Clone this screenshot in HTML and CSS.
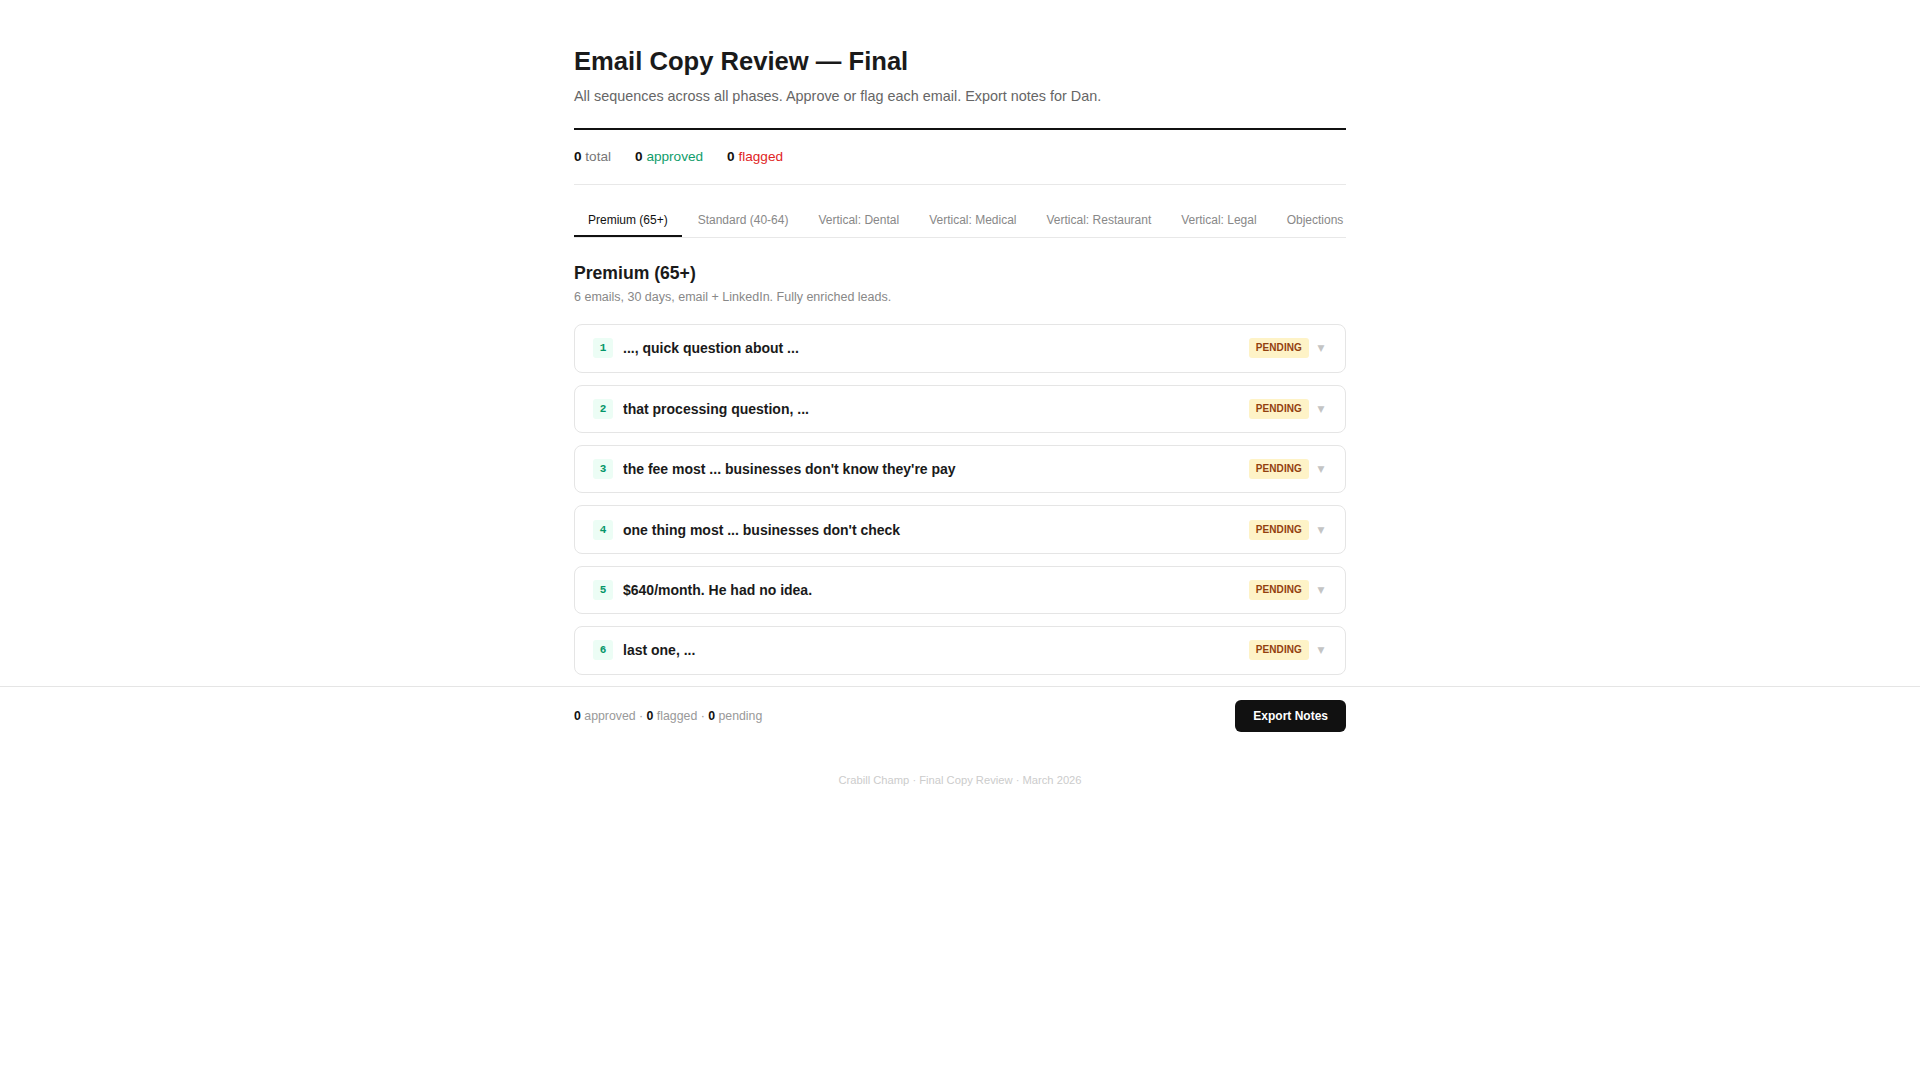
FILE: index.html
```html
<!DOCTYPE html>
<html lang="en">
<head>
<meta charset="utf-8">
<title>Email Copy Review — Final</title>
<link rel="stylesheet" href="styles.css">
</head>
<body>
<main class="wrap">
  <header class="header">
    <h1 class="title">Email Copy Review — Final</h1>
    <p class="subtitle">All sequences across all phases. Approve or flag each email. Export notes for Dan.</p>
  </header>

  <div class="stats">
    <span class="stat"><b>0</b> total</span>
    <span class="stat stat-approved"><b>0</b> approved</span>
    <span class="stat stat-flagged"><b>0</b> flagged</span>
  </div>

  <nav class="tabs">
    <button class="tab active">Premium (65+)</button>
    <button class="tab">Standard (40-64)</button>
    <button class="tab">Vertical: Dental</button>
    <button class="tab">Vertical: Medical</button>
    <button class="tab">Vertical: Restaurant</button>
    <button class="tab">Vertical: Legal</button>
    <button class="tab">Objections</button>
  </nav>

  <section class="section">
    <h2 class="section-title">Premium (65+)</h2>
    <p class="section-desc">6 emails, 30 days, email + LinkedIn. Fully enriched leads.</p>

    <div class="list">
      <div class="card"><span class="num">1</span><span class="subject">..., quick question about ...</span><span class="status">PENDING</span><span class="chev">▼</span></div>
      <div class="card"><span class="num">2</span><span class="subject">that processing question, ...</span><span class="status">PENDING</span><span class="chev">▼</span></div>
      <div class="card"><span class="num">3</span><span class="subject">the fee most ... businesses don't know they're pay</span><span class="status">PENDING</span><span class="chev">▼</span></div>
      <div class="card"><span class="num">4</span><span class="subject">one thing most ... businesses don't check</span><span class="status">PENDING</span><span class="chev">▼</span></div>
      <div class="card"><span class="num">5</span><span class="subject">$640/month. He had no idea.</span><span class="status">PENDING</span><span class="chev">▼</span></div>
      <div class="card"><span class="num">6</span><span class="subject">last one, ...</span><span class="status">PENDING</span><span class="chev">▼</span></div>
    </div>
  </section>
</main>

<div class="bar">
  <div class="bar-inner">
    <div class="bar-stats"><b>0</b> approved · <b>0</b> flagged · <b>0</b> pending</div>
    <button class="export">Export Notes</button>
  </div>
</div>

<footer class="footer">Crabill Champ · Final Copy Review · March 2026</footer>
</body>
</html>
```

FILE: styles.css
```css
* { box-sizing: border-box; }

html, body {
  margin: 0;
  padding: 0;
  background: #fff;
}

body {
  font-family: "Liberation Sans", Arial, Helvetica, sans-serif;
  color: #111;
}

.wrap {
  max-width: 820px;
  margin: 0 auto;
  padding: 46px 24px 0;
}

.header {
  padding-bottom: 21px;
  border-bottom: 2px solid #111;
}

.title {
  margin: 0 0 9px;
  font-size: 25.6px;
  line-height: 1.2;
  font-weight: 700;
  color: #1a1a1a;
}

.subtitle {
  margin: 0;
  font-size: 14.4px;
  line-height: 21.6px;
  color: #666;
}

.stats {
  display: flex;
  gap: 24px;
  padding: 16px 0;
  font-size: 13.6px;
  line-height: 22px;
  color: #777;
  border-bottom: 1px solid #e8e8e8;
}

.stat b { color: #111; font-weight: 700; }
.stat-approved { color: #0f9d6b; }
.stat-flagged { color: #e02424; }

.tabs {
  display: flex;
  gap: 2px;
  margin-top: 16px;
  border-bottom: 1px solid #e8e8e8;
  overflow-x: auto;
  scrollbar-width: none;
}

.tab {
  flex: 0 0 auto;
  padding: 12px 14px 8px;
  border: 0;
  border-bottom: 2px solid transparent;
  background: none;
  font-family: inherit;
  font-size: 12px;
  line-height: 14px;
  color: #888;
  white-space: nowrap;
  cursor: pointer;
}

.tab.active {
  color: #111;
  border-bottom-color: #111;
}

.section {
  padding-top: 24px;
}

.section-title {
  margin: 0;
  font-size: 17.6px;
  line-height: 22px;
  font-weight: 700;
  color: #1a1a1a;
}

.section-desc {
  margin: 4px 0 18px;
  font-size: 12.5px;
  line-height: 18px;
  color: #888;
}

.list {
  display: flex;
  flex-direction: column;
  gap: 12px;
  padding-bottom: 11px;
}

.card {
  display: flex;
  align-items: center;
  height: 48.4px;
  padding: 0 18px;
  border: 1px solid #e5e5e5;
  border-radius: 8px;
  background: #fff;
}

.num {
  flex: 0 0 auto;
  width: 20px;
  height: 20px;
  display: flex;
  align-items: center;
  justify-content: center;
  border-radius: 3px;
  background: #ecfdf5;
  color: #059669;
  font-family: "Liberation Mono", "DejaVu Sans Mono", monospace;
  font-size: 11px;
  font-weight: 700;
}

.subject {
  flex: 1 1 auto;
  margin-left: 10px;
  font-size: 14px;
  font-weight: 700;
  color: #1a1a1a;
  white-space: nowrap;
  overflow: hidden;
  text-overflow: ellipsis;
}

.status {
  flex: 0 0 auto;
  padding: 3px 7px;
  border-radius: 3px;
  background: #fef3c7;
  color: #92400e;
  font-size: 10px;
  line-height: 14px;
  font-weight: 700;
  letter-spacing: 0.1px;
}

.chev {
  flex: 0 0 auto;
  width: 12px;
  margin-left: 6px;
  text-align: center;
  font-family: "DejaVu Sans", sans-serif;
  font-size: 9px;
  color: #c4c4c4;
}

.bar {
  border-top: 1px solid #e5e5e5;
  background: #fff;
}

.bar-inner {
  max-width: 820px;
  margin: 0 auto;
  padding: 13px 24px;
  display: flex;
  align-items: center;
  justify-content: space-between;
}

.bar-stats {
  font-size: 12.32px;
  color: #999;
}

.bar-stats b { color: #111; }

.export {
  padding: 9px 18px;
  border: 0;
  border-radius: 6px;
  background: #111;
  color: #fff;
  font-family: inherit;
  font-size: 12px;
  line-height: 14px;
  font-weight: 700;
  cursor: pointer;
}

.footer {
  padding: 27px 0 40px;
  text-align: center;
  font-size: 11.2px;
  line-height: 16px;
  color: #ccc;
}
```
